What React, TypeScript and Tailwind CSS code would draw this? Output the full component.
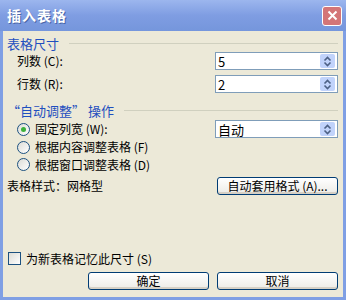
import React from "react";

const font = { fontFamily: '"Noto Sans CJK SC", "Liberation Sans", sans-serif' };

function Spinner({ value }: { value: string }) {
  return (
    <div className="flex h-[18px] w-[123px] items-center border border-[#7f9db9] bg-white pl-[2px] pr-[2px]">
      <span className="flex-1 text-[13px] leading-none text-black">{value}</span>
      <div className="flex h-[14px] w-[15px] flex-col items-center justify-center rounded-[2px] bg-[#c1d3fb]">
        <svg width="9" height="11" viewBox="0 0 9 11">
          <path d="M1.5 4.5 L4.5 1.5 L7.5 4.5" stroke="#4d6185" strokeWidth="1.6" fill="none" />
          <path d="M1.5 6.5 L4.5 9.5 L7.5 6.5" stroke="#4d6185" strokeWidth="1.6" fill="none" />
        </svg>
      </div>
    </div>
  );
}

function Radio({ checked }: { checked?: boolean }) {
  return (
    <span className="flex h-[13px] w-[13px] items-center justify-center rounded-full border border-[#1c5180] bg-gradient-to-br from-[#dcdcd6] to-white">
      {checked && <span className="h-[5px] w-[5px] rounded-full bg-[#3bb13a]" />}
    </span>
  );
}

function Button({ children }: { children: React.ReactNode }) {
  return (
    <div className="flex h-[18px] w-[121px] items-center justify-center rounded-[3px] border border-[#003c74] bg-gradient-to-b from-white to-[#ecebe6] text-[12px] leading-none text-black shadow-[inset_0_-2px_0_#d6d0c5]">
      {children}
    </div>
  );
}

function GroupTitle({ children }: { children: React.ReactNode }) {
  return (
    <div className="flex h-[13px] items-center gap-[10px]">
      <span className="text-[13px] leading-none text-[#1f4fbf]">{children}</span>
      <span className="h-px flex-1 bg-[#d0d0bf]" />
    </div>
  );
}

export default function App() {
  return (
    <div className="flex h-[300px] w-[346px] flex-col overflow-hidden bg-[#7f9fe4]" style={font}>
      {/* title bar */}
      <div className="flex h-[31px] shrink-0 items-center justify-between bg-gradient-to-b from-[#9cb6ee] via-[#7f9de2] to-[#7596dc] pl-[7px] pr-[4px]">
        <span className="text-[14px] font-bold tracking-[1px] text-white [text-shadow:1px_1px_0_#4a66a8]">插入表格</span>
        <div className="flex h-[20px] w-[20px] items-center justify-center rounded-[3px] border border-white bg-[#d47577]">
          <svg width="11" height="11" viewBox="0 0 11 11">
            <path d="M1.5 1.5 L9.5 9.5 M9.5 1.5 L1.5 9.5" stroke="white" strokeWidth="2" />
          </svg>
        </div>
      </div>

      {/* body */}
      <div className="mx-[3px] mb-[3px] flex flex-1 flex-col bg-[#ece9d8] pl-[4px] pr-[5px] pt-[6px]">
        <GroupTitle>表格尺寸</GroupTitle>
        <div className="mt-[2px] flex flex-col gap-[5px] pl-[10px]">
          <div className="flex items-center justify-between">
            <span className="text-[12px] leading-none text-black">列数 (C):</span>
            <Spinner value="5" />
          </div>
          <div className="flex items-center justify-between">
            <span className="text-[12px] leading-none text-black">行数 (R):</span>
            <Spinner value="2" />
          </div>
        </div>

        <div className="mt-[11px]">
          <GroupTitle>“自动调整” 操作</GroupTitle>
        </div>
        <div className="mt-[3px] flex flex-col pl-[10px]">
          <div className="flex h-[18px] items-center justify-between">
            <div className="flex items-center gap-[5px]">
              <Radio checked />
              <span className="text-[12px] leading-none text-black">固定列宽 (W):</span>
            </div>
            <Spinner value="自动" />
          </div>
          <div className="flex h-[18px] items-center gap-[5px]">
            <Radio />
            <span className="text-[12px] leading-none text-black">根据内容调整表格 (F)</span>
          </div>
          <div className="flex h-[17px] items-center gap-[5px]">
            <Radio />
            <span className="text-[12px] leading-none text-black">根据窗口调整表格 (D)</span>
          </div>
        </div>

        <div className="mt-[4px] flex items-center justify-between">
          <span className="text-[12px] leading-none text-black">表格样式：网格型</span>
          <Button>自动套用格式 (A)...</Button>
        </div>

        <div className="flex-1" />

        <div className="flex items-center gap-[5px] pl-[1px]">
          <span className="h-[13px] w-[13px] border border-[#1c5180] bg-gradient-to-br from-[#dcdcd6] to-white" />
          <span className="text-[12px] leading-none text-black">为新表格记忆此尺寸 (S)</span>
        </div>
        <div className="mb-[7px] mt-[7px] flex justify-end gap-[8px]">
          <Button>确定</Button>
          <Button>取消</Button>
        </div>
      </div>
    </div>
  );
}
